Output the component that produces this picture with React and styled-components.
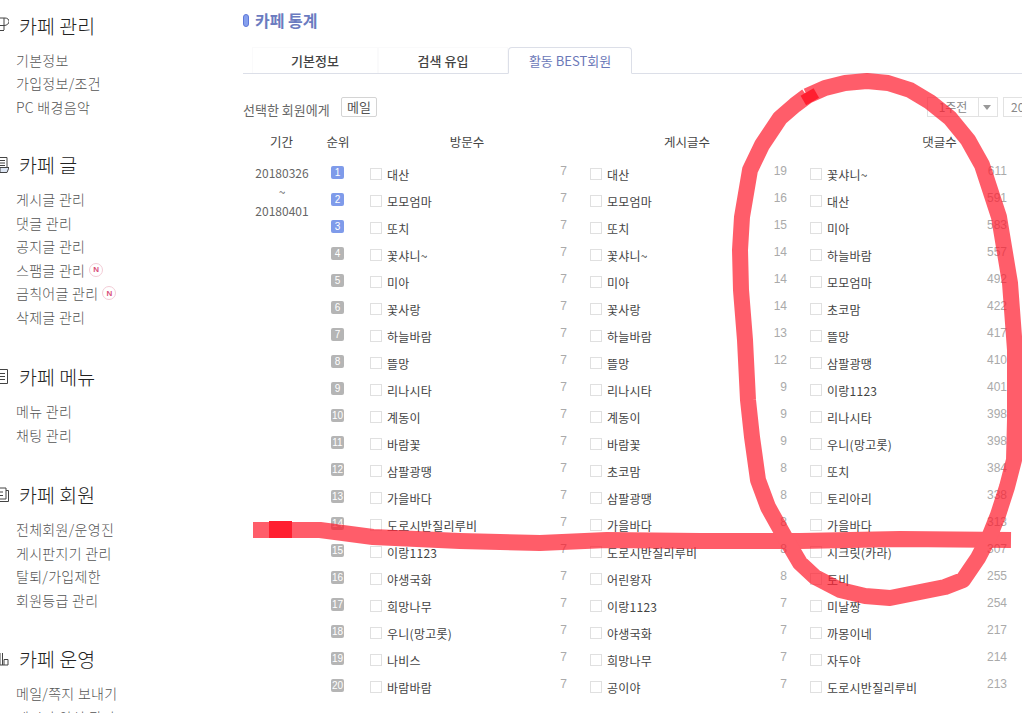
import styled, { createGlobalStyle } from "styled-components";

const menus = [
  { title: "카페 관리", icon: "gear", gap: 33, links: [["기본정보"], ["가입정보/조건"], ["PC 배경음악"]] },
  { title: "카페 글", icon: "post", gap: 35, links: [["게시글 관리"], ["댓글 관리"], ["공지글 관리"], ["스팸글 관리", true], ["금칙어글 관리", true], ["삭제글 관리"]] },
  { title: "카페 메뉴", icon: "menu", gap: 35, links: [["메뉴 관리"], ["채팅 관리"]] },
  { title: "카페 회원", icon: "member", gap: 34, links: [["전체회원/운영진"], ["게시판지기 관리"], ["탈퇴/가입제한"], ["회원등급 관리"]] },
  { title: "카페 운영", icon: "manage", gap: 0, links: [["메일/쪽지 보내기"], ["게시판 양식 관리"]] },
];

const visits = ["대산", "모모엄마", "또치", "꽃샤니~", "미아", "꽃사랑", "하늘바람", "뜰망", "리나시타", "계동이", "바람꽃", "삼팔광땡", "가을바다", "도로시반질리루비", "이랑1123", "야생국화", "희망나무", "우니(망고롯)", "나비스", "바람바람"];
const posts = [["대산", 19], ["모모엄마", 16], ["또치", 15], ["꽃샤니~", 14], ["미아", 14], ["꽃사랑", 14], ["하늘바람", 13], ["뜰망", 12], ["리나시타", 9], ["계동이", 9], ["바람꽃", 9], ["초코맘", 8], ["삼팔광땡", 8], ["가을바다", 8], ["도로시반질리루비", 8], ["어린왕자", 8], ["이랑1123", 7], ["야생국화", 7], ["희망나무", 7], ["공이야", 7]];
const comments = [["꽃샤니~", 611], ["대산", 591], ["미아", 583], ["하늘바람", 557], ["모모엄마", 492], ["초코맘", 422], ["뜰망", 417], ["삼팔광땡", 410], ["이랑1123", 401], ["리나시타", 398], ["우니(망고롯)", 398], ["또치", 384], ["토리아리", 338], ["가을바다", 313], ["시크릿(카라)", 307], ["토비", 255], ["미날짱", 254], ["까몽이네", 217], ["자두야", 214], ["도로시반질리루비", 213]];

const circle = "807,96 825,88 845,83 867,81 888,83 910,90 930,102 950,118 968,140 982,165 999,217 1010,283 1015,350 1015,420 1014,460 1007,487 998,515 990,535 978,558 963,580 945,587 920,592 890,598 865,596 840,590 815,577 800,563 787,541 768,507 758,480 752,437 748,400 745,340 741,290 740,250 742,217 750,170 762,145 780,118 795,105 807,96";
const line = "253,530 320,530 373,537 460,541 540,543 607,540 700,541 800,541 900,539 1011,540";

function MenuIcon({ type }) {
  return (
    <IconBox viewBox="0 0 18 18" fill="none" stroke="#444" strokeWidth="1">
      {type === "gear" && <path d="M9 2h5c2.5 0 4 1.5 4 3.5s-2 4-5 4h-4M13 2v12M9 14.5h4" />}
      {type === "post" && (
        <>
          <path d="M9 1.5h7v10M9 4.5h5M9 7h5M9 9.5h5" />
          <path d="M9 11.5h9l-2 5H9z" fill="#dde6f4" />
        </>
      )}
      {type === "menu" && <path d="M9 1.5h7.5v14H9M9 5.5h5M9 8.5h5M9 11.5h5" />}
      {type === "member" && <path d="M9 2h6v11H9M15 4.5h2.5v11H9M9 6h3M9 9.5h3" />}
      {type === "manage" && <path d="M9 3v12h8V9.5h-4V15M11.5 3v12" />}
    </IconBox>
  );
}

function MemberCell({ name, count }) {
  return (
    <Member>
      <Check type="checkbox" />
      <Name>{name}</Name>
      <Count>{count}</Count>
    </Member>
  );
}

export default function App() {
  return (
    <>
      <GlobalStyle />
      <Page>
        <Sidebar>
          {menus.map((m) => (
            <Section key={m.title} $gap={m.gap}>
              <SectionTitle>
                <MenuIcon type={m.icon} />
                {m.title}
              </SectionTitle>
              {m.links.map(([label, isNew]) => (
                <NavLink key={label}>
                  {label}
                  {isNew && <NewBadge>N</NewBadge>}
                </NavLink>
              ))}
            </Section>
          ))}
        </Sidebar>

        <Main>
          <Heading>카페 통계</Heading>
          <Tabs>
            <Tab>기본정보</Tab>
            <Tab>검색 유입</Tab>
            <Tab $active>활동 BEST회원</Tab>
          </Tabs>

          <Actions>
            <ActionLabel>선택한 회원에게</ActionLabel>
            <MailButton>메일</MailButton>
            <PeriodSelect>
              <PeriodText>1주전</PeriodText>
              <PeriodArrow />
            </PeriodSelect>
            <DateBox>20</DateBox>
          </Actions>

          <HeaderRow>
            <PeriodHead>기간</PeriodHead>
            <RankHead>순위</RankHead>
            <ColHead>방문수</ColHead>
            <ColHead>게시글수</ColHead>
            <ColHead $last>댓글수</ColHead>
          </HeaderRow>

          <Body>
            <PeriodCell>
              20180326
              <br />~<br />
              20180401
            </PeriodCell>
            <Rows>
              {visits.map((name, i) => (
                <Row key={i}>
                  <RankCell>
                    <RankBadge $top={i < 3}>{i + 1}</RankBadge>
                  </RankCell>
                  <MemberCell name={name} count={7} />
                  <MemberCell name={posts[i][0]} count={posts[i][1]} />
                  <MemberCell name={comments[i][0]} count={comments[i][1]} />
                </Row>
              ))}
            </Rows>
          </Body>
        </Main>

        <Scribble viewBox="0 0 1022 713">
          <g opacity="0.72" fill="none" stroke="#ff1f30" strokeWidth="16" strokeLinejoin="round">
            <polyline points={line} />
            <polyline points={circle} />
          </g>
          <rect x="269" y="521" width="23" height="17" fill="#ff1f30" />
          <rect x="802" y="91" width="15" height="11" fill="#ff1f30" transform="rotate(-30 810 96)" />
        </Scribble>
      </Page>
    </>
  );
}

const GlobalStyle = createGlobalStyle`
  html, body {
    margin: 0;
    background: #fff;
  }
  body {
    font-family: "Noto Sans CJK KR", "Noto Sans", sans-serif;
    overflow: hidden;
  }
`;

const Page = styled.div`
  position: relative;
  display: flex;
  width: 1022px;
  height: 713px;
  overflow: hidden;
`;

const Sidebar = styled.aside`
  flex: 0 0 243px;
  padding-top: 12px;
`;

const Section = styled.section`
  margin-bottom: ${(p) => p.$gap}px;
`;

const SectionTitle = styled.h3`
  display: flex;
  align-items: center;
  gap: 10px;
  height: 26px;
  margin: 0 0 10px -9px;
  font-size: 19.5px;
  font-weight: 300;
  color: #222;
`;

const IconBox = styled.svg`
  flex: none;
  width: 18px;
  height: 18px;
`;

const NavLink = styled.div`
  display: flex;
  align-items: center;
  height: 23.5px;
  padding-left: 16px;
  font-size: 14px;
  font-weight: 300;
  letter-spacing: 0.3px;
  color: #555;
`;

const NewBadge = styled.span`
  display: inline-flex;
  align-items: center;
  justify-content: center;
  box-sizing: border-box;
  width: 14px;
  height: 14px;
  margin-left: 4px;
  border: 1px solid #f3ccd6;
  border-radius: 50%;
  font-family: "Liberation Sans", sans-serif;
  font-size: 8px;
  font-weight: 700;
  color: #d94f7a;
`;

const Main = styled.main`
  flex: 0 0 779px;
  min-width: 0;
`;

const Heading = styled.h2`
  display: flex;
  align-items: center;
  height: 26px;
  margin: 7px 0 14px;
  font-size: 16px;
  font-weight: 700;
  color: #6b7bc0;

  &::before {
    content: "";
    width: 4px;
    height: 11px;
    margin-right: 6px;
    border: 1px solid #5f78d8;
    border-radius: 3px;
    background: #86a0ee;
  }
`;

const Tabs = styled.div`
  display: grid;
  grid-template-columns: 126px 130px 124px;
  height: 26px;
  padding-left: 9px;
  border-bottom: 1px solid #dcdfe8;
`;

const Tab = styled.div`
  display: flex;
  align-items: center;
  justify-content: center;
  height: ${(p) => (p.$active ? "27px" : "26px")};
  box-sizing: border-box;
  border: 1px solid ${(p) => (p.$active ? "#dcdfe8" : "#fafafb")};
  border-bottom: ${(p) => (p.$active ? "1px solid #fff" : "none")};
  border-radius: ${(p) => (p.$active ? "4px 4px 0 0" : "0")};
  font-size: 13px;
  font-weight: ${(p) => (p.$active ? 400 : 500)};
  color: ${(p) => (p.$active ? "#6b78b8" : "#444")};
`;

const Actions = styled.div`
  display: flex;
  align-items: center;
  height: 21px;
  margin-top: 22px;
`;

const ActionLabel = styled.span`
  width: 98px;
  padding-top: 5px;
  font-size: 13px;
  white-space: nowrap;
  color: #666;
`;

const MailButton = styled.button`
  width: 36px;
  height: 20px;
  padding: 0;
  border: 1px solid #d4d4d4;
  border-radius: 2px;
  background: #fff;
  font-family: inherit;
  font-size: 13px;
  line-height: 16px;
  color: #555;
`;

const PeriodSelect = styled.div`
  display: flex;
  width: 71px;
  height: 20px;
  box-sizing: border-box;
  margin-left: auto;
  border: 1px solid #e2e2e2;
`;

const PeriodText = styled.span`
  flex: 1;
  font-size: 12px;
  line-height: 18px;
  text-align: center;
  color: #888;
`;

const PeriodArrow = styled.span`
  position: relative;
  width: 18px;
  border-left: 1px solid #e2e2e2;

  &::after {
    content: "";
    position: absolute;
    top: 7px;
    left: 4px;
    border: 4px solid transparent;
    border-top: 5px solid #999;
    border-bottom: 0;
  }
`;

const DateBox = styled.div`
  width: 19px;
  height: 20px;
  box-sizing: border-box;
  margin-left: 5px;
  padding-left: 7px;
  border: 1px solid #e2e2e2;
  border-right: none;
  font-size: 12px;
  line-height: 18px;
  color: #888;
`;

const HeaderRow = styled.div`
  display: grid;
  grid-template-columns: 77px 47px 220px 220px 215px;
  height: 20px;
  margin-top: 15px;
  font-size: 12.5px;
  line-height: 20px;
  text-align: center;
  color: #444;
`;

const PeriodHead = styled.div``;

const RankHead = styled.div`
  padding-right: 11px;
`;

const ColHead = styled.div`
  padding-left: ${(p) => (p.$last ? "50px" : "0")};
  padding-right: ${(p) => (p.$last ? "0" : "20px")};
`;

const Body = styled.div`
  display: flex;
  margin-top: 8px;
`;

const PeriodCell = styled.div`
  flex: 0 0 77px;
  box-sizing: border-box;
  padding-top: 3px;
  padding-left: 1px;
  font-size: 12px;
  line-height: 19px;
  text-align: center;
  color: #666;
`;

const Rows = styled.div`
  flex: none;
`;

const Row = styled.div`
  display: flex;
  align-items: center;
  height: 27.05px;
`;

const RankCell = styled.div`
  flex: 0 0 47px;
  box-sizing: border-box;
  padding-left: 11px;
`;

const RankBadge = styled.span`
  display: flex;
  align-items: center;
  justify-content: center;
  width: 13px;
  height: 13px;
  margin-top: -3px;
  border-radius: 2px;
  background: ${(p) => (p.$top ? "#7f9bea" : "#b5b5b5")};
  font-family: "Liberation Sans", sans-serif;
  font-size: 10px;
  color: #fff;
`;

const Member = styled.div`
  display: flex;
  flex: 0 0 220px;
  align-items: center;
  box-sizing: border-box;
  padding-left: 3px;
  padding-right: 20px;
`;

const Check = styled.input`
  appearance: none;
  flex: none;
  width: 12px;
  height: 12px;
  margin: 0 5px 0 0;
  border: 1px solid #e0e0e0;
  background: #fff;
`;

const Name = styled.span`
  flex: 1;
  padding-top: 1px;
  font-size: 12px;
  letter-spacing: 0.25px;
  color: #444;
`;

const Count = styled.span`
  margin-top: -6px;
  font-family: "Liberation Sans", sans-serif;
  font-size: 12px;
  color: #aaa;
`;

const Scribble = styled.svg`
  position: absolute;
  top: 0;
  left: 0;
  width: 1022px;
  height: 713px;
  pointer-events: none;
`;
